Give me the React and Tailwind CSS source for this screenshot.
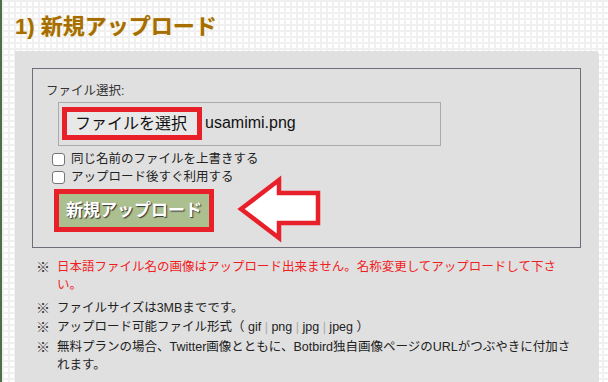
export default function App() {
  return (
    <div className="relative w-[608px] h-[382px] overflow-hidden border-l-2 border-[#4e6e48] bg-white bg-[linear-gradient(to_right,#f0f0f0_2px,transparent_2px),linear-gradient(to_bottom,#f0f0f0_2px,transparent_2px)] bg-[length:6px_6px] font-['Liberation_Sans','Noto_Sans_CJK_JP',sans-serif] text-[#222]">
      {/* Heading */}
      <h1 className="pl-[13px] pt-[12px] text-[22px] leading-[30px] font-bold text-[#a66e00] [text-shadow:0_0_1px_#d9b46a]">
        1) 新規アップロード
      </h1>

      {/* Panel */}
      <div className="ml-[13px] mt-[9px] w-[584px] h-[340px] rounded-tr-[4px] bg-[#e0e0e0] pt-[17px] pl-[17px]">
        {/* Upload form */}
        <div className="w-[549px] h-[180px] border border-[#6e6e7a] pl-[13px] pt-[13px]">
          <div className="text-[12.5px] leading-[18px] text-[#333]">ファイル選択:</div>

          <div className="mt-[2px] ml-[12px] w-[383px] h-[44px] border border-[#aaaaaa] flex items-start pt-[4px] pl-[3px]">
            <div className="h-[33px] border-[5px] border-[#e8202a] bg-[#e8e8e8] pl-[8px] pr-[10px] flex items-center text-[16px] leading-none text-[#111]">
              ファイルを選択
            </div>
            <span className="ml-[3px] mt-[6px] text-[16px] leading-[20px] text-[#111]">usamimi.png</span>
          </div>

          <div className="mt-[4px] ml-[6px] flex flex-col text-[12.5px] leading-[18px] text-[#222]">
            <label className="flex items-center gap-[6px]">
              <span className="w-[13px] h-[13px] rounded-[3px] border border-[#767676] bg-white" />
              同じ名前のファイルを上書きする
            </label>
            <label className="flex items-center gap-[6px]">
              <span className="w-[13px] h-[13px] rounded-[3px] border border-[#767676] bg-white" />
              アップロード後すぐ利用する
            </label>
          </div>

          <button className="mt-[3px] ml-[8px] w-[160px] h-[43px] border-[5px] border-[#e8202a] bg-[#abc08e] text-white text-[17px] font-bold leading-none [text-shadow:1px_1px_1px_#333]">
            新規アップロード
          </button>
        </div>

        {/* Notes */}
        <ul className="mt-[10px] w-[540px] text-[12.5px] leading-[18px]">
          <li className="flex">
            <span className="w-[21px] shrink-0 ml-[4px] text-[14px] text-[#333]">※</span>
            <span className="text-[#f0201e] w-[519px]">
              日本語ファイル名の画像はアップロード出来ません。名称変更してアップロードして下さい。
            </span>
          </li>
          <li className="flex mt-[5px]">
            <span className="w-[21px] shrink-0 ml-[4px] text-[14px] text-[#333]">※</span>
            <span>ファイルサイズは3MBまでです。</span>
          </li>
          <li className="flex mt-[1px]">
            <span className="w-[21px] shrink-0 ml-[4px] text-[14px] text-[#333]">※</span>
            <span>
              アップロード可能ファイル形式（ gif <span className="text-[#aaa]">|</span> png{' '}
              <span className="text-[#aaa]">|</span> jpg <span className="text-[#aaa]">|</span> jpeg ）
            </span>
          </li>
          <li className="flex mt-[2px]">
            <span className="w-[21px] shrink-0 ml-[4px] text-[14px] text-[#333]">※</span>
            <span className="w-[519px]">
              無料プランの場合、Twitter画像とともに、Botbird独自画像ページのURLがつぶやきに付加されます。
            </span>
          </li>
        </ul>
      </div>

      {/* Red arrow annotation */}
      <svg className="absolute left-[232px] top-[174px]" width="92" height="72" viewBox="232 174 92 72">
        <polygon
          points="239,209 277,180 277,193 316,193 316,223 277,223 277,238"
          fill="#ffffff"
          stroke="#e8202a"
          strokeWidth="4.5"
          strokeLinejoin="miter"
        />
      </svg>
    </div>
  );
}
